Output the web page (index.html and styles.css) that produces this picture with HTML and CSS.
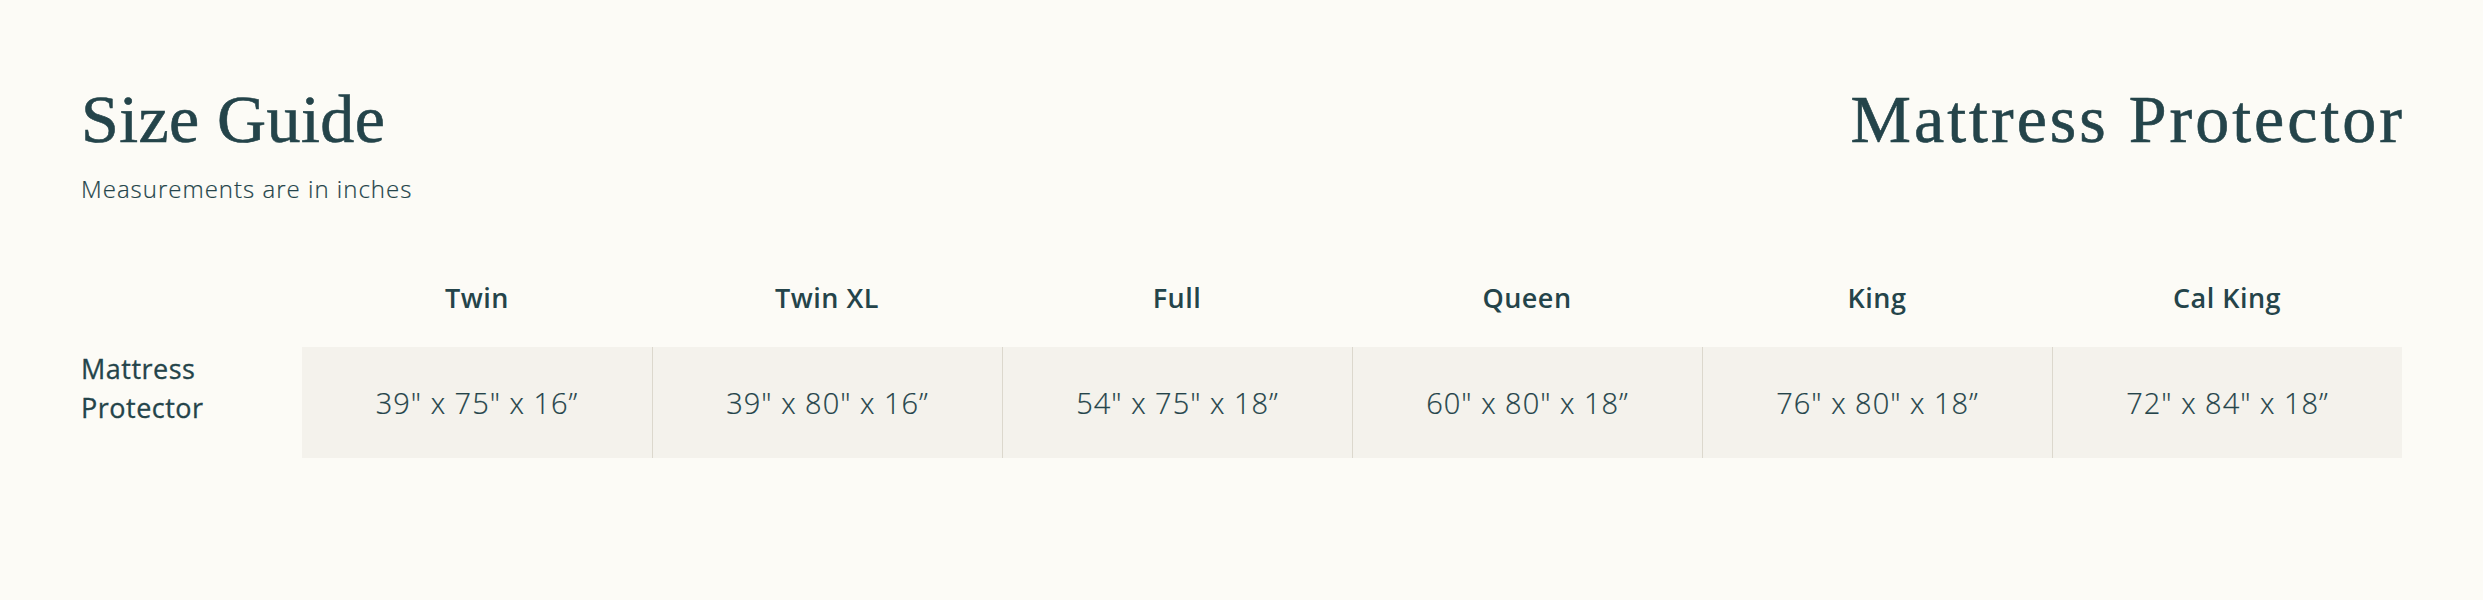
FILE: index.html
```html
<!DOCTYPE html>
<html lang="en">
<head>
<meta charset="utf-8">
<title>Size Guide</title>
<link rel="stylesheet" href="styles.css">
</head>
<body>
<main class="page">
  <header class="top">
    <div class="titles">
      <h1 class="title">Size Guide</h1>
      <p class="subtitle">Measurements are in inches</p>
    </div>
    <h2 class="product">Mattress Protector</h2>
  </header>
  <section class="chart">
    <div class="head-row">
      <div class="corner"></div>
      <div class="size">Twin</div>
      <div class="size">Twin XL</div>
      <div class="size">Full</div>
      <div class="size">Queen</div>
      <div class="size">King</div>
      <div class="size">Cal King</div>
    </div>
    <div class="data-row">
      <div class="label">Mattress<br>Protector</div>
      <div class="cells">
        <div class="cell">39" x 75" x 16”</div>
        <div class="cell">39" x 80" x 16”</div>
        <div class="cell">54" x 75" x 18”</div>
        <div class="cell">60" x 80" x 18”</div>
        <div class="cell">76" x 80" x 18”</div>
        <div class="cell">72" x 84" x 18”</div>
      </div>
    </div>
  </section>
</main>
</body>
</html>
```

FILE: styles.css
```css
html, body {
  margin: 0;
  padding: 0;
  background: #fcfbf6;
}

body {
  color: #24444a;
  font-family: "Open Sans", "Liberation Sans", sans-serif;
}

.page {
  padding: 85px 81px 0 81px;
}

.top {
  display: flex;
  justify-content: space-between;
  align-items: flex-start;
}

.title,
.product {
  margin: 0;
  font-family: "Liberation Serif", serif;
  font-weight: 400;
  font-size: 68px;
  line-height: 68px;
  color: #24444a;
  -webkit-text-stroke: 0.6px #24444a;
}

.title {
  letter-spacing: 0.4px;
}

.product {
  letter-spacing: 3px;
  margin-right: -3px;
}

.subtitle {
  margin: 21px 0 0 0;
  font-size: 24px;
  font-weight: 300;
  line-height: 29px;
  letter-spacing: 1px;
  color: #24444a;
  -webkit-text-stroke: 0.2px #24444a;
}

.chart {
  margin-top: 78px;
}

.head-row {
  display: grid;
  grid-template-columns: 221px repeat(6, 1fr);
  height: 66px;
}

.size {
  text-align: center;
  font-size: 27px;
  font-weight: 600;
  line-height: 34px;
  letter-spacing: 0.5px;
  color: #24444a;
}

.data-row {
  display: grid;
  grid-template-columns: 221px 1fr;
}

.label {
  padding-top: 2px;
  font-size: 27px;
  font-weight: 500;
  line-height: 39px;
  letter-spacing: 0.5px;
  color: #24444a;
  -webkit-text-stroke: 0.3px #24444a;
}

.cells {
  display: grid;
  grid-template-columns: repeat(6, 1fr);
  background: #f4f2ec;
  height: 111px;
}

.cell {
  display: flex;
  align-items: center;
  justify-content: center;
  font-size: 29px;
  font-weight: 300;
  letter-spacing: 1px;
  color: #24444a;
  -webkit-text-stroke: 0.2px #24444a;
  border-left: 1px solid #dcd8cd;
}

.cell:first-child {
  border-left: none;
}
```
